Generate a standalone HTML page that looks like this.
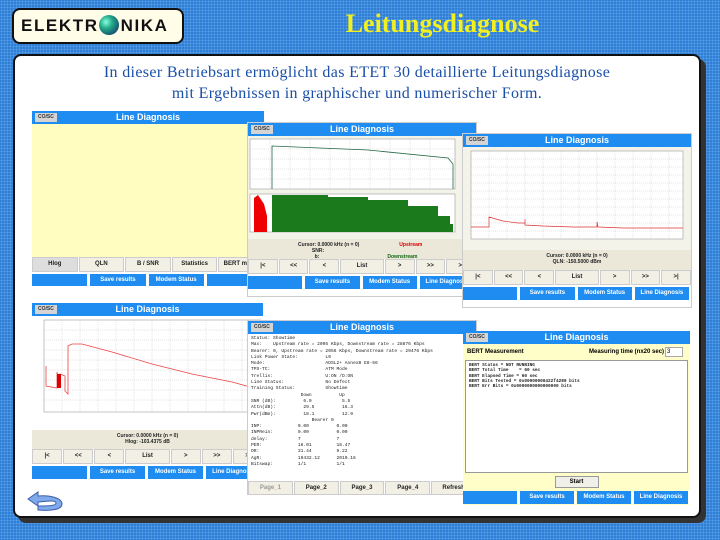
<!DOCTYPE html>
<html><head><meta charset="utf-8"><style>
*{margin:0;padding:0;box-sizing:border-box}
body{width:720px;height:540px;overflow:hidden;position:relative;background:#2f7fd6;background-image:radial-gradient(#5a9ee6 0.8px,transparent 1px);background-size:3px 3px;font-family:"Liberation Sans",sans-serif}
.logo{position:absolute;left:12px;top:8px;width:172px;height:36px;background:#fffde8;border:2px solid #111;border-radius:8px;font:bold 17px "Liberation Sans",sans-serif;color:#111;line-height:32px;padding-left:7px;letter-spacing:1.6px}
.globe{display:inline-block;width:20px;height:20px;border-radius:50%;background:radial-gradient(circle at 35% 35%,#8fd 0,#2a8 35%,#136 90%);vertical-align:-4px;margin:0 2px 0 0}
.title{position:absolute;left:300px;top:9px;width:285px;text-align:center;font:bold 26px "Liberation Serif",serif;color:#f2f020}
.main{position:absolute;left:13px;top:54px;width:688px;height:464px;background:#fff;border:2px solid #111;border-radius:8px;box-shadow:5px 5px 0 #333}
.txt{position:absolute;left:14px;width:686px;text-align:center;font:16px "Liberation Serif",serif;color:#1a4fa8;letter-spacing:.35px}
.pn{position:absolute;background:#fff;font-family:"Liberation Sans",sans-serif;overflow:hidden}
.hd{height:13px;background:#1e8cf0;color:#fff;font-weight:bold;font-size:9px;text-align:center;line-height:13px;position:relative}
.cs{position:absolute;left:3px;top:2px;height:9px;background:#d4d4d4;color:#333;font-size:5px;line-height:9px;padding:0 3px;font-weight:bold}
.row{display:flex;gap:1px}
.row div{flex:1;text-align:center;font-size:6px;font-weight:bold;white-space:nowrap;overflow:hidden}
.nav div{background:#f2f0e4;border:1px solid #ccc;height:15px;line-height:13px;color:#222}
.blu{margin-top:2px}
.blu div{background:#1e8cf0;color:#fff;height:13px;line-height:13px;border-right:2px solid #fff}
.info{background:#ebe8da;height:20px;font-size:5px;text-align:center;font-weight:bold;padding-top:3px;line-height:6px;color:#222}
.mono{font:4.6px "Liberation Mono",monospace;line-height:6.3px;color:#222;white-space:pre;padding:2px 3px}
</style></head><body>
<div class="logo">ELEKTR<span class="globe"></span>NIKA</div>
<div class="title">Leitungsdiagnose</div>
<div class="main"></div>
<div class="txt" style="top:64px">In dieser Betriebsart ermöglicht das ETET 30 detaillierte Leitungsdiagnose</div>
<div class="txt" style="top:85px">mit Ergebnissen in graphischer und numerischer Form.</div>

<!-- P1 -->
<div class="pn" style="left:32px;top:111px;width:232px;height:175px">
<div class="hd"><span class="cs">CO/SC</span>Line Diagnosis</div>
<div style="height:133px;background:#fffdc0"></div>
<div class="row nav"><div style="background:#ddd">Hlog</div><div>QLN</div><div>B / SNR</div><div>Statistics</div><div>BERT meas.</div></div>
<div class="row blu"><div></div><div>Save results</div><div>Modem Status</div><div></div></div>
</div>

<!-- P2 -->
<div class="pn" style="left:247px;top:122px;width:230px;height:175px;border:1px solid #ccc">
<div class="hd"><span class="cs">CO/SC</span>Line Diagnosis</div>
<svg width="230" height="103" style="display:block;background:#f4f3ea">
<rect x="2" y="3" width="205" height="50" fill="#fff" stroke="#888" stroke-width=".5"/>
<g stroke="#bbb" stroke-width=".4" stroke-dasharray="1,1"><path d="M2 13H207M2 23H207M2 33H207M2 43H207M22 3V53M42 3V53M62 3V53M82 3V53M102 3V53M122 3V53M142 3V53M162 3V53M182 3V53"/></g>
<path d="M24 53V10L120 14L200 22L205 28V53" fill="none" stroke="#264" stroke-width=".8"/>
<rect x="2" y="58" width="205" height="38" fill="#fff" stroke="#888" stroke-width=".5"/>
<path d="M6 96V62L10 59L16 68L19 80V96Z" fill="#e00"/>
<path d="M24 96V59H80V61H120V64H160V70H190V80H202V88H205V96Z" fill="#1b7a1b"/>
</svg>
<div class="info" style="text-align:left;padding-left:50px">Cursor: 0.0000 kHz (n = 0)<span style="color:#d00;margin-left:40px">Upstream</span><br>&nbsp;&nbsp;&nbsp;&nbsp;&nbsp;&nbsp;&nbsp;&nbsp;&nbsp;&nbsp;SNR:<br>&nbsp;&nbsp;&nbsp;&nbsp;&nbsp;&nbsp;&nbsp;&nbsp;&nbsp;&nbsp;&nbsp;&nbsp;b:<span style="color:#161;margin-left:68px">Downstream</span></div>
<div class="row nav"><div>|&lt;</div><div>&lt;&lt;</div><div>&lt;</div><div style="flex:1.5">List</div><div>&gt;</div><div>&gt;&gt;</div><div>&gt;|</div></div>
<div class="row blu"><div></div><div>Save results</div><div>Modem Status</div><div>Line Diagnosis</div></div>
</div>

<!-- P3 -->
<div class="pn" style="left:462px;top:133px;width:230px;height:175px;border:1px solid #ccc">
<div class="hd"><span class="cs">CO/SC</span>Line Diagnosis</div>
<svg width="230" height="103" style="display:block;background:#f4f3ea">
<rect x="8" y="4" width="212" height="88" fill="#fff" stroke="#888" stroke-width=".5"/>
<g stroke="#bbb" stroke-width=".4" stroke-dasharray="1,1"><path d="M8 12H220M8 20H220M8 28H220M8 36H220M8 44H220M8 52H220M8 60H220M8 68H220M8 76H220M8 84H220M26 4V92M44 4V92M62 4V92M80 4V92M98 4V92M116 4V92M134 4V92M152 4V92M170 4V92M188 4V92M206 4V92"/></g>
<path d="M8 80H26V70L40 74L55 76L62 76V72L62 78L80 79L110 80L134 80V75L135 80L160 81L220 81" fill="none" stroke="#d33" stroke-width=".7"/>
</svg>
<div class="info">Cursor: 0.0000 kHz (n = 0)<br>QLN: -150.5000 dBm</div>
<div class="row nav"><div>|&lt;</div><div>&lt;&lt;</div><div>&lt;</div><div style="flex:1.5">List</div><div>&gt;</div><div>&gt;&gt;</div><div>&gt;|</div></div>
<div class="row blu"><div></div><div>Save results</div><div>Modem Status</div><div>Line Diagnosis</div></div>
</div>

<!-- P4 -->
<div class="pn" style="left:32px;top:303px;width:231px;height:176px">
<div class="hd"><span class="cs">CO/SC</span>Line Diagnosis</div>
<svg width="231" height="114" style="display:block;background:#f4f3ea">
<rect x="0" y="0" width="231" height="114" fill="#fff"/>
<rect x="12" y="4" width="217" height="92" fill="#fff" stroke="#888" stroke-width=".5"/>
<g stroke="#bbb" stroke-width=".4" stroke-dasharray="1,1"><path d="M12 14H229M12 24H229M12 34H229M12 44H229M12 54H229M12 64H229M12 74H229M12 84H229M30 4V96M48 4V96M66 4V96M84 4V96M102 4V96M120 4V96M138 4V96M156 4V96M174 4V96M192 4V96M210 4V96"/></g>
<path d="M14 50V70L25 72V56L28 72V58L33 60V75L36 78V30L40 28H50L80 36L120 48L160 58L200 66L229 74" fill="none" stroke="#e44" stroke-width=".8"/>
<rect x="25" y="58" width="4" height="14" fill="#d00"/>
</svg>
<div class="info" style="height:19px">Cursor: 0.0000 kHz (n = 0)<br>Hlog: -103.4375 dB</div>
<div class="row nav"><div>|&lt;</div><div>&lt;&lt;</div><div>&lt;</div><div style="flex:1.5">List</div><div>&gt;</div><div>&gt;&gt;</div><div>&gt;|</div></div>
<div class="row blu"><div></div><div>Save results</div><div>Modem Status</div><div>Line Diagnosis</div></div>
</div>

<!-- P5 -->
<div class="pn" style="left:247px;top:320px;width:230px;height:175px;border:1px solid #ccc">
<div class="hd"><span class="cs">CO/SC</span>Line Diagnosis</div>
<div class="mono" style="height:135px;background:#fff">Status: Showtime
Max:    Upstream rate = 2095 Kbps, Downstream rate = 28876 Kbps
Bearer: 0, Upstream rate = 2056 Kbps, Downstream rate = 29476 Kbps
Link Power State:          L0
Mode:                      ADSL2+ AnnexB E8-56
TPS-TC:                    ATM Mode
Trellis:                   U:ON /D:ON
Line Status:               No Defect
Training Status:           Showtime
                  Down          Up
SNR (dB):          6.0           5.5
Attn(dB):          29.5          16.3
Pwr(dBm):          18.1          12.9
                      Bearer 0
INP:             0.00          0.00
INPRein:         0.00          0.00
delay:           7             7
PER:             16.01         16.47
OR:              31.44         9.22
AgR:             19432.12      2010.16
Bitswap:         1/1           1/1</div>
<div class="row nav" style="margin-top:12px"><div style="color:#999">Page_1</div><div>Page_2</div><div>Page_3</div><div>Page_4</div><div>Refresh</div></div>
<div class="row blu"><div></div><div>Save results</div><div>Modem Status</div><div>Line Diagnosis</div></div>
</div>

<!-- P6 -->
<div class="pn" style="left:463px;top:331px;width:227px;height:174px;background:#fffdc8">
<div class="hd"><span class="cs">CO/SC</span>Line Diagnosis</div>
<div style="height:16px;font-size:6px;font-weight:bold;line-height:16px;padding-left:4px;position:relative">BERT Measurement<span style="position:absolute;left:126px">Measuring time (nx20 sec)</span><span style="position:absolute;left:202px;top:3px;width:18px;height:10px;background:#fff;border:1px solid #aaa;line-height:8px;font-weight:normal;padding-left:1px">3</span></div>
<div class="mono" style="margin:0 2px;height:113px;background:#fff;border:1px solid #999;font-weight:bold;line-height:5.3px;font-size:4.4px">BERT Status = NOT RUNNING
BERT Total Time    = 60 sec
BERT Elapsed Time = 60 sec
BERT Bits Tested = 0x00000000422f4280 bits
BERT Err Bits = 0x0000000000000000 bits</div>
<div style="margin:3px auto 0;width:44px;height:12px;background:#f0efe8;border:1px solid #999;text-align:center;font-size:6px;font-weight:bold;line-height:10px">Start</div>
<div class="row blu" style="margin-top:3px"><div style="border-left:0"></div><div>Save results</div><div>Modem Status</div><div>Line Diagnosis</div></div>
</div>

<svg style="position:absolute;left:24px;top:490px" width="42" height="24"><path d="M4 9L14 2V6C26 5 38 8 38 14C38 20 26 21 14 20V16C24 16 32 16 32 13C32 10 24 11 14 12V16Z" fill="#7fa9e8" stroke="#3a5fb0" stroke-width="1"/></svg>
</body></html>
